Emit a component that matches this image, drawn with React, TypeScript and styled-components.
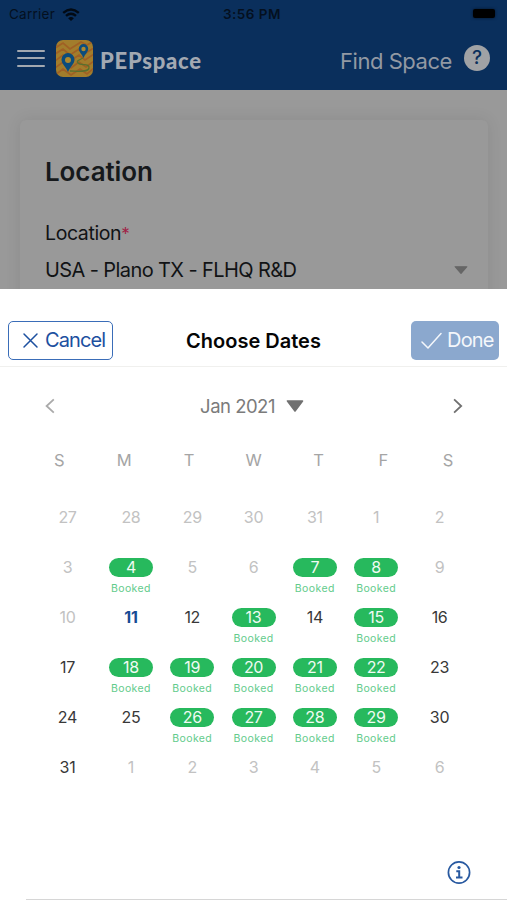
import React from "react";
import styled, { createGlobalStyle } from "styled-components";

const GlobalStyle = createGlobalStyle`
  * { box-sizing: border-box; }
  body { margin: 0; background: #fff; font-family: Inter, "Liberation Sans", sans-serif; }
  button { font-family: inherit; padding: 0; margin: 0; background: none; border: 0; }
  svg { display: block; flex: none; }
`;

const Screen = styled.div`
  width: 507px;
  height: 900px;
  overflow: hidden;
  display: flex;
  flex-direction: column;
  background: #fff;
`;

const Page = styled.div`
  height: 289px;
  flex: none;
  overflow: hidden;
  background: #999;
`;

const Header = styled.header`
  height: 90px;
  background: #0a2f5c;
`;

const StatusBar = styled.div`
  height: 28px;
  padding: 0 12px 0 9px;
  display: grid;
  grid-template-columns: 1fr auto 1fr;
  align-items: center;
  color: #04101f;
  font-size: 13.5px;
  line-height: 28px;
`;

const Carrier = styled.div`
  display: flex;
  align-items: center;
  gap: 7px;
  letter-spacing: 0.25px;
`;

const Clock = styled.div`
  font-weight: 600;
  font-size: 13.5px;
  letter-spacing: 0.5px;
`;

const Battery = styled.div`
  justify-self: end;
  width: 22px;
  height: 9px;
  margin-bottom: 1px;
  border-radius: 2px;
  background: #000;
  box-shadow: 0 0 3px #04142a;
`;

const NavBar = styled.nav`
  height: 62px;
  padding: 0 17px;
  display: flex;
  align-items: center;
`;

const MenuButton = styled.button`
  width: 28px;
  height: 17px;
  margin-bottom: 2px;
  display: flex;
  flex-direction: column;
  justify-content: space-between;

  i { height: 2px; width: 28px; background: #a2a8b0; border-radius: 1px; }
`;

const Brand = styled.div`
  display: flex;
  align-items: center;
  margin-left: 11px;
  margin-bottom: 2px;
`;

const BrandName = styled.span`
  margin-left: 7px;
  padding-top: 5px;
  font: 900 22px/28px Lato, sans-serif;
  letter-spacing: 0.75px;
  color: #a3a9b2;
`;

const FindSpace = styled.span`
  margin-left: auto;
  margin-right: 12px;
  padding-top: 4px;
  font-size: 22px;
  line-height: 28px;
  letter-spacing: -0.45px;
  color: #9299a3;
`;

const HelpBadge = styled.div`
  width: 26px;
  height: 26px;
  margin-bottom: 2px;
  border-radius: 50%;
  background: #a0a2a5;
  color: #0a2f5c;
  font-size: 19px;
  font-weight: 500;
  line-height: 26px;
  text-align: center;
`;

const Card = styled.section`
  margin: 30px 19px 0 20px;
  height: 220px;
  padding: 33px 20px 0 25px;
  border-radius: 6px;
  background: #999;
  box-shadow: 0 0 16px rgba(0, 0, 0, 0.09);
  color: #111315;
`;

const CardTitle = styled.h2`
  margin: 0;
  font-size: 26px;
  line-height: 38px;
  font-weight: 600;
  letter-spacing: -0.1px;
  color: #16191c;
`;

const FieldLabel = styled.div`
  margin-top: 28px;
  font-size: 19.5px;
  line-height: 28px;
  letter-spacing: -0.4px;

  span { color: #a02347; font-size: 17px; margin-left: 0; }
`;

const FieldValue = styled.div`
  margin-top: 7px;
  display: flex;
  align-items: center;
  justify-content: space-between;
  font-size: 20px;
  line-height: 30px;
  letter-spacing: -0.6px;
`;

const Sheet = styled.main`
  flex: 1;
  display: flex;
  flex-direction: column;
`;

const SheetBar = styled.div`
  height: 78px;
  padding: 26px 8px 0;
  display: grid;
  grid-template-columns: 1fr auto 1fr;
  align-items: center;
  border-bottom: 1px solid #f0f0ee;
`;

const SheetTitle = styled.h1`
  margin: 0;
  font-size: 20px;
  line-height: 28px;
  font-weight: 600;
  letter-spacing: 0;
  color: #050505;
`;

const ActionButton = styled.button<{ $filled?: boolean }>`
  width: ${(p) => (p.$filled ? 88 : 105)}px;
  height: 39px;
  justify-self: ${(p) => (p.$filled ? "end" : "start")};
  display: flex;
  align-items: center;
  padding-left: ${(p) => (p.$filled ? 9 : 13)}px;
  gap: ${(p) => (p.$filled ? 5 : 6)}px;
  border: ${(p) => (p.$filled ? "0" : "1px solid #3a6db8")};
  border-radius: 5px;
  background: ${(p) => (p.$filled ? "#8ba8ce" : "#fff")};
  color: ${(p) => (p.$filled ? "#f4f7fb" : "#1d50a0")};
  font-size: 20px;
  line-height: 37px;
  letter-spacing: ${(p) => (p.$filled ? -0.8 : -0.9)}px;
`;

const MonthBar = styled.div`
  height: 76px;
  padding: 2px 43px 0;
  display: flex;
  align-items: center;
  justify-content: space-between;
`;

const MonthPicker = styled.button`
  display: flex;
  align-items: center;
  gap: 11px;
  font-size: 18.5px;
  line-height: 28px;
  letter-spacing: -0.5px;
  color: #7b7b7b;
  margin-right: 3px;
`;

const Weekdays = styled.div`
  height: 34px;
  margin: 0 26.5px 0 27px;
  display: grid;
  grid-template-columns: repeat(7, 1fr);
  font-size: 16.5px;
  line-height: 34px;
  text-align: center;
  color: #a5a5a5;
`;

const Days = styled.div`
  margin-top: 20px;
  padding-left: 34.7px;
  display: grid;
  grid-template-columns: 65.6px repeat(5, 61.3px) 65.6px;
  grid-auto-rows: 50px;
`;

type DayKind = "muted" | "today" | "open" | "booked";

const dayColors: Record<DayKind, string> = {
  muted: "#c2c2c2",
  today: "#174a94",
  open: "#383838",
  booked: "#effbf3",
};

const Day = styled.div`
  display: flex;
  flex-direction: column;
  align-items: center;
  padding-top: 11px;
`;

const DayNumber = styled.div<{ $kind: DayKind }>`
  width: 44px;
  height: 19px;
  border-radius: 10px;
  background: ${(p) => (p.$kind === "booked" ? "#27b95d" : "transparent")};
  color: ${(p) => dayColors[p.$kind]};
  font-size: 16px;
  line-height: 19px;
  font-weight: ${(p) => (p.$kind === "today" ? 700 : 400)};
  letter-spacing: -0.3px;
  text-align: center;
`;

const BookedLabel = styled.div`
  margin-top: 5px;
  font-size: 10.5px;
  line-height: 14px;
  letter-spacing: 0.4px;
  color: #62cb8b;
`;

const SheetFooter = styled.footer`
  margin-top: auto;
  margin-left: 26px;
  height: 40px;
  padding-right: 36px;
  display: flex;
  justify-content: flex-end;
  align-items: flex-start;
  border-bottom: 1px solid #d6d6d6;
`;

const WifiIcon = () => (
  <svg width="18" height="13" viewBox="0 0 18 13" fill="none" stroke="#020a14" strokeWidth="2.4">
    <path d="M1.2 4.8Q9-1.8 16.8 4.8M4 7.9Q9 3.6 14 7.9" />
    <path d="M6.1 10.2Q9 7.7 11.9 10.2L9 13Z" fill="#020a14" stroke="none" />
  </svg>
);

const LogoIcon = () => (
  <svg width="37" height="37" viewBox="0 0 37 37">
    <defs>
      <clipPath id="logo-tile"><rect width="37" height="37" rx="7" /></clipPath>
    </defs>
    <g clipPath="url(#logo-tile)">
      <rect width="37" height="37" fill="#a27d2c" />
      <g fill="none" stroke="#a06024" strokeWidth="1.7">
        <path d="M-1 8L7 3L14 9L25 2L31 5L38 1" />
        <path d="M-1 14L7 9L14 15L23 9L28 14L38 8" />
        <path d="M-1 21L7 15L14 21L23 15L29 20L38 14" />
        <path d="M-1 28L7 22L15 28L23 22L30 27L38 21" />
        <path d="M-1 35L7 29L15 35L24 29L31 34L38 28" />
      </g>
      <path d="M27 18C23 20 20 21 22 23C25 26 34 23 33 28C32 33 20 31 14 31" fill="none" stroke="#58702f" strokeWidth="1.3" />
      <path d="M12 32C10 27 5.5 24 5.5 19.5A6.5 6.5 0 0 1 18.5 19.5C18.5 24 14 27 12 32Z" fill="#0b4c7c" />
      <circle cx="12" cy="20" r="3" fill="#ac8830" />
      <path d="M27.5 18C26 14 22.8 12 22.8 8.7A4.7 4.7 0 0 1 32.2 8.7C32.2 12 29 14 27.5 18Z" fill="#0b4c7c" />
      <circle cx="27.5" cy="9" r="2.2" fill="#ac8830" />
    </g>
  </svg>
);

const CloseIcon = () => (
  <svg width="17" height="17" viewBox="0 0 17 17" stroke="currentColor" strokeWidth="1.5" strokeLinecap="round">
    <path d="M2 2L15 15M15 2L2 15" />
  </svg>
);

const CheckIcon = () => (
  <svg width="22" height="18" viewBox="0 0 22 18" fill="none" stroke="currentColor" strokeWidth="1.5" strokeLinecap="round" strokeLinejoin="round">
    <path d="M2 10L8 16L21 1.5" />
  </svg>
);

const ChevronIcon = ({ direction, color }: { direction: "left" | "right"; color: string }) => (
  <svg width="13" height="16" viewBox="0 0 13 16" fill="none" stroke={color} strokeWidth="1.8">
    <path d={direction === "left" ? "M10.8 1.3L3.6 8L10.8 14.7" : "M3.1 1.3L10.2 8L3.1 14.7"} />
  </svg>
);

const Triangle = ({ width, height, color }: { width: number; height: number; color: string }) => (
  <svg width={width} height={height} viewBox="0 0 18 12" preserveAspectRatio="none">
    <path d="M1.5 1H16.5L9 11Z" fill={color} stroke={color} strokeWidth="1.6" strokeLinejoin="round" />
  </svg>
);

const InfoIcon = () => (
  <svg width="24" height="24" viewBox="0 0 24 24" fill="none" stroke="#2859a0">
    <circle cx="12" cy="12.5" r="10.6" strokeWidth="1.7" />
    <circle cx="12" cy="7.5" r="1.6" fill="#2859a0" stroke="none" />
    <path d="M9.3 11.2H12.2V17M9 17.5H15.5" strokeWidth="2" />
  </svg>
);

const weekdays = ["S", "M", "T", "W", "T", "F", "S"];
const bookedDays = new Set([4, 7, 8, 13, 15, 18, 19, 20, 21, 22, 26, 27, 28, 29]);
const todayNumber = 11;

function kindOf(date: Date): DayKind {
  const number = date.getDate();
  if (date.getMonth() !== 0) return "muted";
  if (bookedDays.has(number)) return "booked";
  if (number === todayNumber) return "today";
  return number > todayNumber ? "open" : "muted";
}

const days = Array.from({ length: 42 }, (_, index) => {
  const date = new Date(2020, 11, 27 + index);
  return { number: date.getDate(), kind: kindOf(date) };
});

export default function App() {
  return (
    <>
      <GlobalStyle />
      <Screen>
        <Page>
          <Header>
            <StatusBar>
              <Carrier>Carrier <WifiIcon /></Carrier>
              <Clock>3:56 PM</Clock>
              <Battery />
            </StatusBar>
            <NavBar>
              <MenuButton aria-label="Menu"><i /><i /><i /></MenuButton>
              <Brand><LogoIcon /><BrandName>PEPspace</BrandName></Brand>
              <FindSpace>Find Space</FindSpace>
              <HelpBadge>?</HelpBadge>
            </NavBar>
          </Header>
          <Card>
            <CardTitle>Location</CardTitle>
            <FieldLabel>Location<span>*</span></FieldLabel>
            <FieldValue>
              USA - Plano TX - FLHQ R&amp;D
              <Triangle width={14} height={8} color="#666" />
            </FieldValue>
          </Card>
        </Page>
        <Sheet>
          <SheetBar>
            <ActionButton><CloseIcon />Cancel</ActionButton>
            <SheetTitle>Choose Dates</SheetTitle>
            <ActionButton $filled><CheckIcon />Done</ActionButton>
          </SheetBar>
          <MonthBar>
            <ChevronIcon direction="left" color="#aaa" />
            <MonthPicker>Jan 2021 <Triangle width={18} height={12} color="#707070" /></MonthPicker>
            <ChevronIcon direction="right" color="#707070" />
          </MonthBar>
          <Weekdays>
            {weekdays.map((day, i) => <span key={i}>{day}</span>)}
          </Weekdays>
          <Days>
            {days.map(({ number, kind }, i) => (
              <Day key={i}>
                <DayNumber $kind={kind}>{number}</DayNumber>
                {kind === "booked" && <BookedLabel>Booked</BookedLabel>}
              </Day>
            ))}
          </Days>
          <SheetFooter><InfoIcon /></SheetFooter>
        </Sheet>
      </Screen>
    </>
  );
}
